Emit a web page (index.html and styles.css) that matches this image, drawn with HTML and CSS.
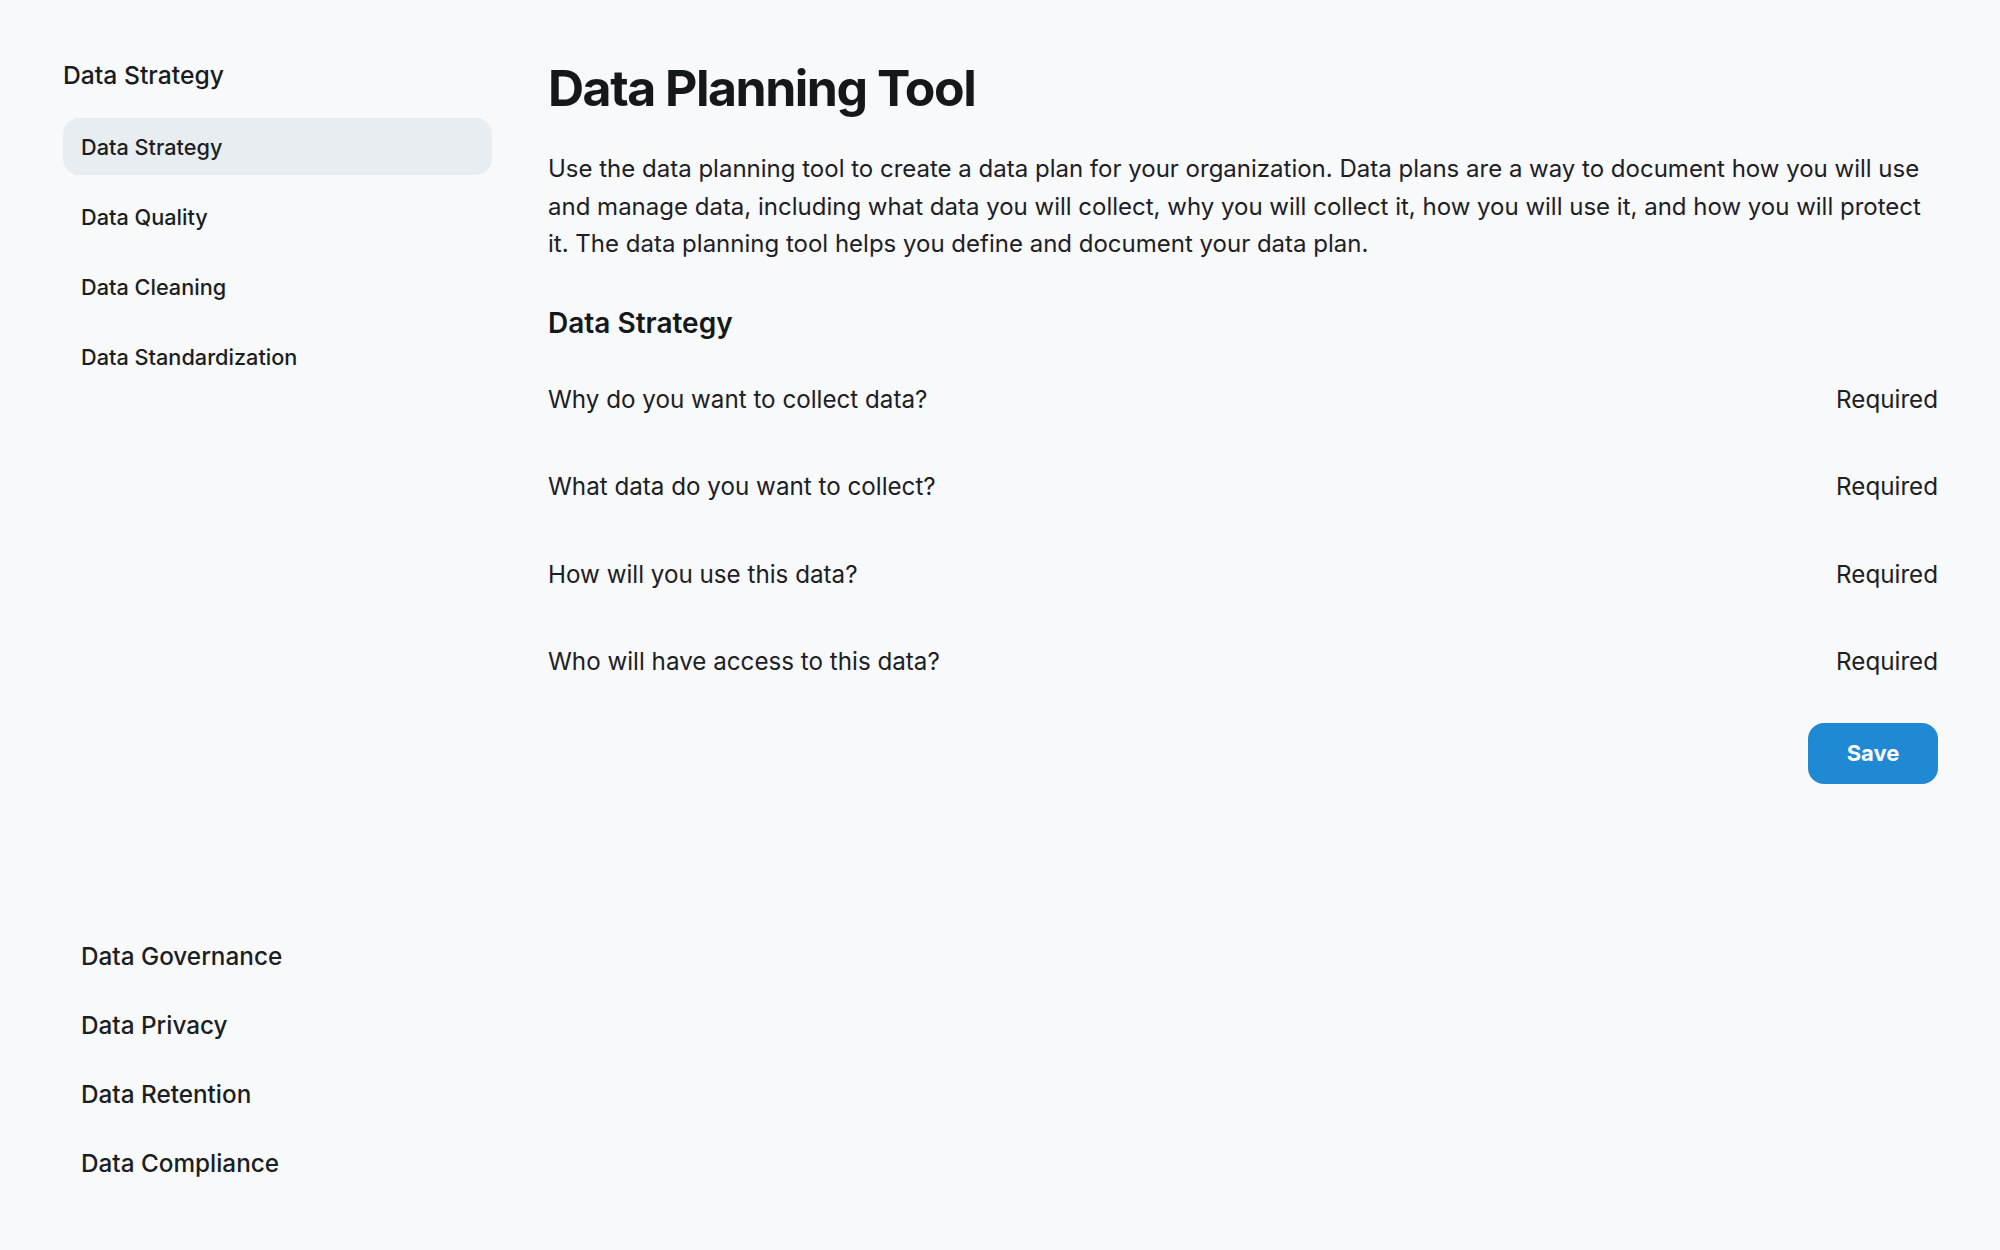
FILE: index.html
```html
<!DOCTYPE html>
<html lang="en">
<head>
<meta charset="utf-8">
<title>Data Planning Tool</title>
<link rel="stylesheet" href="styles.css">
</head>
<body>
<div class="app">
  <aside class="sidebar">
    <div class="side-top">
      <h3 class="side-title">Data Strategy</h3>
      <nav class="subnav">
        <a class="subnav-item active">Data Strategy</a>
        <a class="subnav-item">Data Quality</a>
        <a class="subnav-item">Data Cleaning</a>
        <a class="subnav-item">Data Standardization</a>
      </nav>
    </div>
    <nav class="side-bottom">
      <a class="bottom-item">Data Governance</a>
      <a class="bottom-item">Data Privacy</a>
      <a class="bottom-item">Data Retention</a>
      <a class="bottom-item">Data Compliance</a>
    </nav>
  </aside>
  <main class="content">
    <h1 class="page-title">Data Planning Tool</h1>
    <p class="intro">Use the data planning tool to create a data plan for your organization. Data plans are a way to document how you will use and manage data, including what data you will collect, why you will collect it, how you will use it, and how you will protect it. The data planning tool helps you define and document your data plan.</p>
    <h2 class="section-title">Data Strategy</h2>
    <div class="questions">
      <div class="question-row"><span class="question">Why do you want to collect data?</span><span class="req">Required</span></div>
      <div class="question-row"><span class="question">What data do you want to collect?</span><span class="req">Required</span></div>
      <div class="question-row"><span class="question">How will you use this data?</span><span class="req">Required</span></div>
      <div class="question-row"><span class="question">Who will have access to this data?</span><span class="req">Required</span></div>
    </div>
    <div class="actions">
      <button class="save-btn">Save</button>
    </div>
  </main>
</div>
</body>
</html>
```

FILE: styles.css
```css
* { box-sizing: border-box; }

html, body {
  margin: 0;
  padding: 0;
  background: #f7f9fb;
}

body {
  font-family: "Inter", "Noto Sans", sans-serif;
  color: #181b1f;
}

.app {
  display: flex;
  height: 1250px;
  padding-left: 63px;
  padding-right: 62px;
  gap: 56px;
}

.sidebar {
  width: 429px;
  flex: none;
  display: flex;
  flex-direction: column;
  justify-content: space-between;
  padding-top: 59px;
  padding-bottom: 59px;
}

.side-title {
  margin: 0;
  font-size: 24.7px;
  line-height: 32px;
  font-weight: 500;
}

.subnav {
  margin-top: 27px;
  display: flex;
  flex-direction: column;
  gap: 13px;
}

.subnav-item {
  display: flex;
  align-items: center;
  height: 57px;
  padding-left: 18px;
  border-radius: 16px;
  font-size: 21.7px;
  font-weight: 500;
  color: #1b1e22;
}

.subnav-item.active {
  background: #e8edf1;
}

.side-bottom {
  display: flex;
  flex-direction: column;
  gap: 12px;
}

.bottom-item {
  display: flex;
  align-items: center;
  height: 57px;
  padding-left: 18px;
  font-size: 24.3px;
  font-weight: 500;
  color: #1b1e22;
}

.content {
  flex: 1;
  padding-top: 58px;
}

.page-title {
  margin: 0;
  font-size: 50px;
  line-height: 60px;
  font-weight: 700;
  letter-spacing: -1.5px;
  color: #15181b;
}

.intro {
  margin: 32px 0 0;
  font-size: 24px;
  line-height: 37.5px;
  font-weight: 400;
  color: #1d2024;
}

.section-title {
  margin: 42px 0 0;
  font-size: 28px;
  line-height: 36px;
  font-weight: 600;
  color: #15181b;
}

.questions {
  margin-top: 16px;
  display: flex;
  flex-direction: column;
}

.question-row {
  display: flex;
  justify-content: space-between;
  align-items: center;
  height: 87.3px;
  font-size: 24.2px;
  line-height: 32px;
  color: #1d2024;
}

.actions {
  display: flex;
  justify-content: flex-end;
  margin-top: 17px;
}

.save-btn {
  width: 130px;
  height: 61px;
  border: none;
  border-radius: 16px;
  background: #1f89d3;
  color: #ffffff;
  font-family: "Inter", "Noto Sans", sans-serif;
  font-size: 22px;
  font-weight: 700;
  cursor: pointer;
}
```
